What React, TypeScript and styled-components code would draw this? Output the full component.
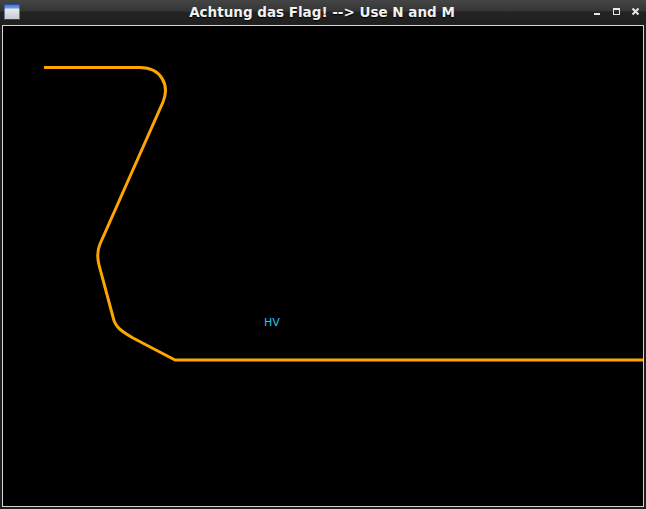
import { FC } from 'react';
import styled, { createGlobalStyle } from 'styled-components';

const GlobalStyle = createGlobalStyle`
   html, body { margin: 0; padding: 0; background: #1f1f1f; }
   body { width: 646px; height: 509px; overflow: hidden; }
`;

const Frame = styled.div`
   width: 646px;
   height: 509px;
   display: flex;
   flex-direction: column;
   background: #1e1e1e;
`;

const TitleBar = styled.div`
   height: 25px;
   display: grid;
   grid-template-columns: 24px 1fr 64px;
   align-items: center;
   background: linear-gradient(#454545 0px, #353535 11px, #232323 12px, #1f1f1f 25px);
`;

const AppIcon = styled.div`
   width: 16px;
   height: 16px;
   margin: 0 0 2px 4px;
   background: linear-gradient(#3d6fc4 0px, #6f9ae0 4px, #e6e9ee 5px, #c8ccd2 15px, #2b58a8 15px);
   box-shadow: inset 0 0 0 1px rgba(30, 60, 120, 0.6);
`;

const Title = styled.div`
   text-align: center;
   color: #f2f2f2;
   font-family: "DejaVu Sans", sans-serif;
   font-weight: bold;
   font-size: 13.5px;
   padding-left: 38px;
   margin-bottom: 2px;
   text-shadow: 0 1px 1px #000;
`;

const Controls = styled.div`
   display: flex;
   gap: 10px;
   justify-content: flex-end;
   align-items: center;
   padding-right: 6px;
   margin-bottom: 2px;
`;

const CtlButton = styled.span`
   width: 9px;
   height: 9px;
   display: flex;
   align-items: center;
   justify-content: center;
`;

const Body = styled.div`
   flex: 1;
   padding: 0 2px 2px 2px;
   display: flex;
`;

const Canvas = styled.div`
   position: relative;
   flex: 1;
   background: #000;
   border: 1px solid #d6d6d6;
   overflow: hidden;
`;

const Label = styled.span<{ $x: number; $y: number }>`
   position: absolute;
   left: ${p => p.$x}px;
   top: ${p => p.$y}px;
   color: #1ec8f0;
   font-family: "DejaVu Sans", sans-serif;
   font-size: 11px;
   line-height: 12px;
`;

const Track = styled.svg`
   position: absolute;
   left: 0;
   top: 0;
`;

// canvas inner origin sits at page (3, 26)
const trackPath =
   'M 41 41.5 L 137 41.5 C 158 41.5 167 59 160 76 L 97 218 C 94 225 94 231 96 239 L 110 291 C 112 301 118 305 130 312 L 172 334 L 643 334';

const App: FC = () => (
   <>
      <GlobalStyle />
      <Frame>
         <TitleBar>
            <AppIcon />
            <Title>Achtung das Flag! --&gt; Use N and M</Title>
            <Controls>
               <CtlButton>
                  <svg width="9" height="9"><rect x="1" y="6" width="6" height="2" fill="#e8e8e8" /></svg>
               </CtlButton>
               <CtlButton>
                  <svg width="9" height="9"><rect x="1.5" y="1.5" width="6" height="6" fill="none" stroke="#e8e8e8" strokeWidth="1" /><rect x="1" y="1" width="7" height="2" fill="#e8e8e8" /></svg>
               </CtlButton>
               <CtlButton>
                  <svg width="9" height="9"><path d="M1.5 1.5 L7.5 7.5 M7.5 1.5 L1.5 7.5" stroke="#e8e8e8" strokeWidth="2" /></svg>
               </CtlButton>
            </Controls>
         </TitleBar>
         <Body>
            <Canvas>
               <Track width="640" height="480">
                  <path d={trackPath} fill="none" stroke="#ffa500" strokeWidth="3" strokeLinejoin="round" />
               </Track>
               <Label $x={261} $y={291}>HV</Label>
            </Canvas>
         </Body>
      </Frame>
   </>
);

export default App;
